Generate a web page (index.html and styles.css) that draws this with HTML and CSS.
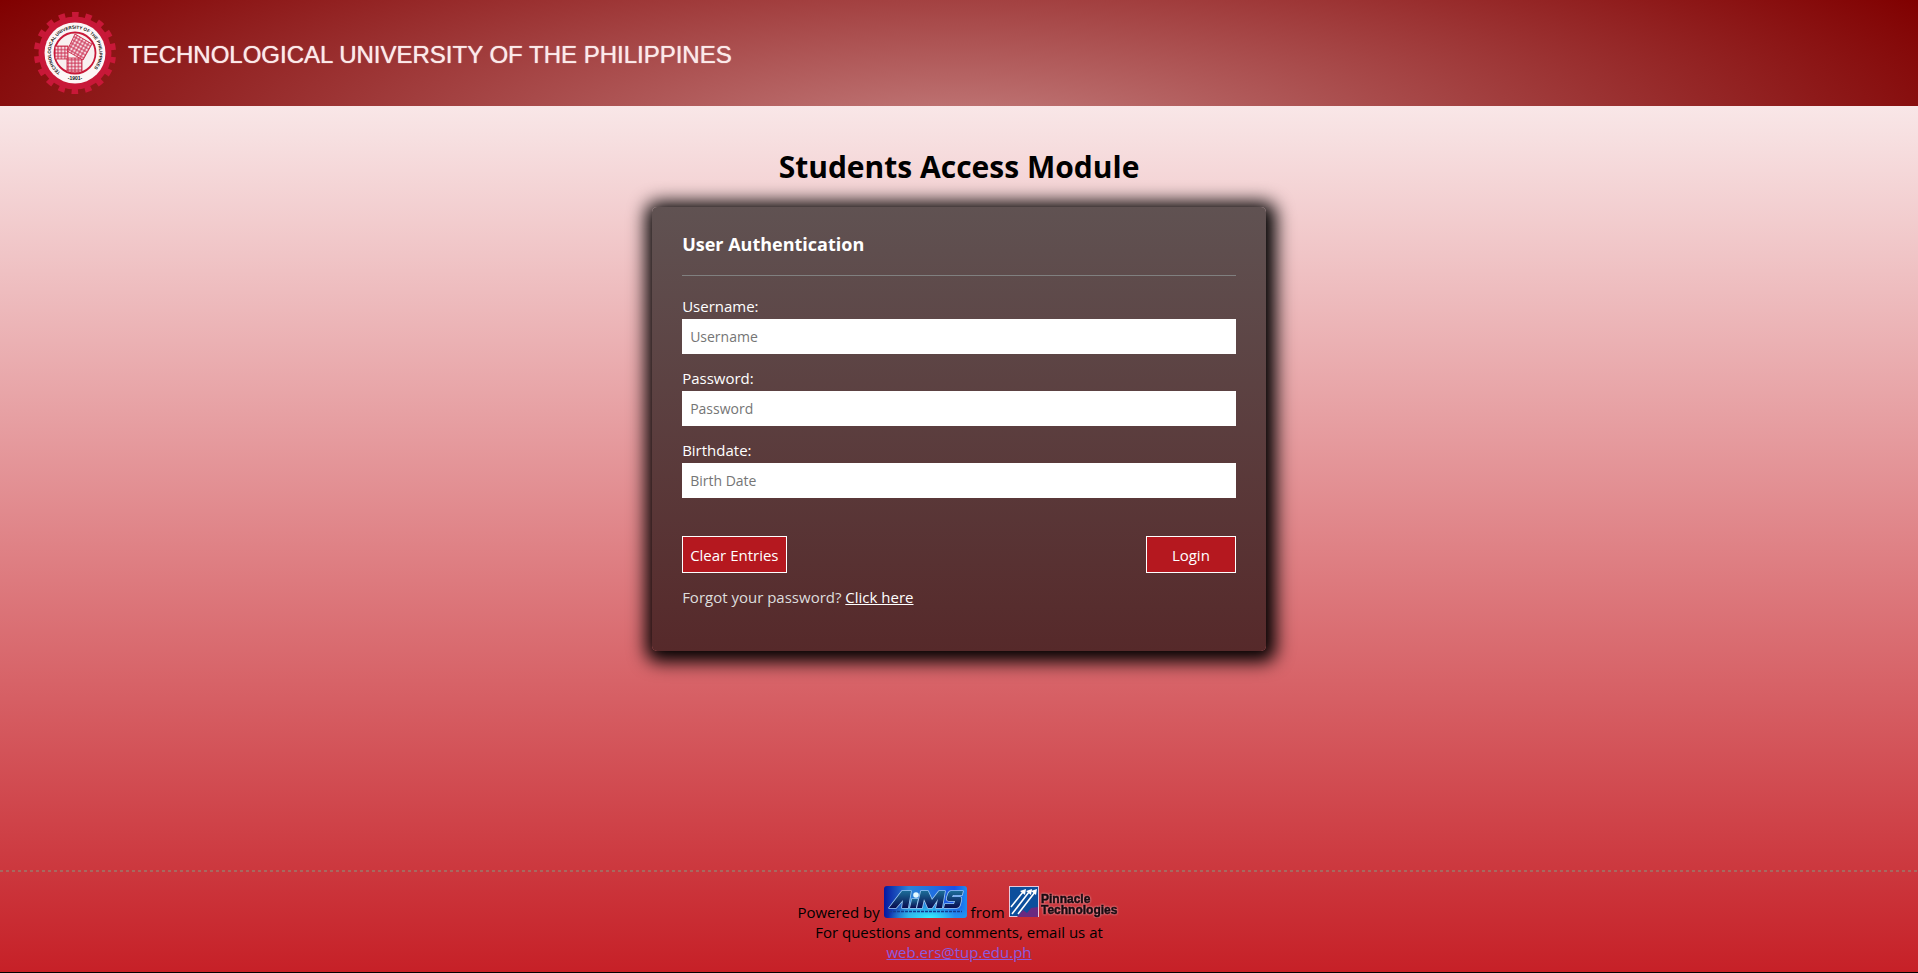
FILE: index.html
```html
<!DOCTYPE html>
<html lang="en">
<head>
<meta charset="utf-8">
<title>Students Access Module</title>
<link rel="stylesheet" href="styles.css">
</head>
<body>
<header class="banner">
  <svg class="seal" viewBox="-42 -42 84 84" role="img" aria-label="University seal">
    <defs>
      <path id="ring" d="M-14.5 19.5A24.3 24.3 0 1 1 14.5 19.5"/>
      <pattern id="grid" width="3.4" height="3.4" patternUnits="userSpaceOnUse"><rect width="3.4" height="3.4" fill="#cc3355"/><rect x=".5" y=".5" width="2.4" height="2.4" fill="#f6dfe4"/></pattern>
      <pattern id="grid-tilted" width="3.4" height="3.4" patternUnits="userSpaceOnUse" patternTransform="rotate(30)"><rect width="3.4" height="3.4" fill="#cc3355"/><rect x=".5" y=".5" width="2.4" height="2.4" fill="#f6dfe4"/></pattern>
    </defs>
    <circle r="36.5" fill="#c81838"/>
    <circle r="38.3" fill="none" stroke="#c81838" stroke-width="5.6" stroke-dasharray="6.4 6.97" stroke-dashoffset="3.2" transform="rotate(10)"/>
    <circle r="30.5" fill="#fdf6f6"/>
    <circle r="20.5" fill="#f8f0f0" stroke="#c81838" stroke-width="1.8"/>
    <rect x="-20" y="-7" width="13" height="13" fill="url(#grid)" stroke="#c81838" stroke-width=".8"/>
    <rect x="-8" y="5" width="15" height="14" fill="url(#grid)" stroke="#c81838" stroke-width=".8"/>
    <path d="M0-19L17-9 8 7-8-2z" fill="url(#grid-tilted)" stroke="#c81838" stroke-width=".8"/>
    <text class="seal-text"><textPath href="#ring">TECHNOLOGICAL UNIVERSITY OF THE PHILIPPINES</textPath></text>
    <text class="seal-text seal-year" y="27" text-anchor="middle">-1901-</text>
  </svg>
  <span class="school">TECHNOLOGICAL UNIVERSITY OF THE PHILIPPINES</span>
</header>
<main class="content">
  <h1 class="title">Students Access Module</h1>
  <form class="card">
    <h2 class="card-title">User Authentication</h2>
    <div class="field"><label for="user">Username:</label><input id="user" type="text" placeholder="Username"></div>
    <div class="field"><label for="pass">Password:</label><input id="pass" type="password" placeholder="Password"></div>
    <div class="field"><label for="birth">Birthdate:</label><input id="birth" type="text" placeholder="Birth Date"></div>
    <div class="actions"><button class="btn" type="reset">Clear Entries</button><button class="btn login" type="submit">Login</button></div>
    <p class="forgot">Forgot your password? <a href="#">Click here</a></p>
  </form>
</main>
<footer class="footer">
  <div>Powered by
    <svg class="aims" viewBox="0 0 83 32" role="img" aria-label="AIMS">
      <defs>
        <linearGradient id="sea" x1="0" y1="0" x2="1" y2="0"><stop offset="0" stop-color="#0618a0"/><stop offset=".3" stop-color="#2c84d8"/><stop offset=".6" stop-color="#1f6fe0"/><stop offset=".85" stop-color="#1a50e8"/><stop offset="1" stop-color="#1c8cf0"/></linearGradient>
        <linearGradient id="ink" x1="0" y1="0" x2="0" y2="1"><stop offset="0" stop-color="#1c6c98"/><stop offset="1" stop-color="#080c50"/></linearGradient>
        <radialGradient id="glow" cx=".55" cy="1" r=".5"><stop offset="0" stop-color="#35f0ff"/><stop offset="1" stop-color="#35f0ff" stop-opacity="0"/></radialGradient>
      </defs>
      <rect width="83" height="32" rx="3" fill="url(#sea)"/>
      <rect width="83" height="32" rx="3" fill="url(#glow)"/>
      <g fill="url(#ink)" stroke="#9cc8f0" stroke-width="1.6" stroke-linejoin="round" paint-order="stroke">
        <path d="M5 22L18 5h9l-3 17h-6l1-8-7 8z"/>
        <path d="M28 13h6l-2 9h-6z"/>
        <path d="M37 5h7l4 9 7-9h6l-3 17h-6l2-9-6 9h-4l-4-9-2 9h-5z"/>
        <path d="M67 5h12l-1 4h-9l-1 2h8q2 0 1 4l-1 4q-1 3-4 3H60l1-4h9l1-3h-6q-3 0-2-4l1-3q1-3 3-3z"/>
      </g>
      <circle cx="32" cy="9" r="2.8" fill="#e4faff"/>
      <path d="M5 25.5h73" stroke="#123c90" stroke-width="1.4" stroke-dasharray="3 1"/>
    </svg>
    from
    <svg class="pinnacle" viewBox="0 0 112 32" role="img" aria-label="Pinnacle Technologies">
      <rect x=".5" y=".5" width="29" height="30" fill="#0d4f9c" stroke="#e6c9dc"/>
      <path d="M8 31L14 24l4 3 4-5 7-1v10z" fill="#6a2a80"/>
      <path d="M2 21L14 6M3 28L20 6M9 28L26 6" stroke="#fff" stroke-width="1.6"/>
      <path d="M11 5l6-2-1 6zM17 5l6-2-1 6zM22 5l6-2-1 6z" fill="#fff"/>
      <g class="pinnacle-text"><text x="32" y="17">Pinnacle</text><text x="32" y="28">Technologies</text></g>
    </svg>
  </div>
  <div>For questions and comments, email us at</div>
  <div><a class="mail" href="mailto:web.ers@tup.edu.ph">web.ers@tup.edu.ph</a></div>
</footer>
</body>
</html>
```

FILE: styles.css
```css
* { box-sizing: border-box; }
body {
  margin: 0;
  min-height: 100vh;
  display: flex;
  flex-direction: column;
  font: 15px/20px "Open Sans", sans-serif;
  color: #000;
  background: linear-gradient(#ffffff, #c62027);
  border-bottom: 1px solid #000;
}
.banner {
  display: flex;
  align-items: center;
  gap: 11px;
  height: 106px;
  padding-left: 33px;
  background: radial-gradient(57% 270% at 50% 130%, #c47e7e, #800000);
}
.seal { width: 84px; height: 84px; flex: none; }
.seal-text { font: bold 4.5px "Liberation Sans", sans-serif; fill: #111; }
.seal-year { font-size: 5px; }
.school {
  padding-top: 3px;
  font: 24px/30px "Liberation Sans", Arial, sans-serif;
  color: #fbeaea;
  text-shadow: 0 0 1px #fbeaea;
}
.content {
  flex: 1;
  display: flex;
  flex-direction: column;
  align-items: center;
  padding-top: 40px;
}
.title { margin: 0 0 20px; font-size: 30px; line-height: 41px; }
.card {
  width: 32%;
  min-width: 320px;
  padding: 25px 30px 44px;
  border-radius: 5px;
  color: #fff;
  background: linear-gradient(#605252, #56292a);
  box-shadow: 2px 3px 18px 8px #000;
}
.card-title {
  margin: 0 0 20px;
  padding-bottom: 18px;
  border-bottom: 1px solid #808080;
  font-size: 18px;
  line-height: 25px;
}
.field { display: flex; flex-direction: column; gap: 3px; margin-bottom: 14px; }
.field input {
  width: 100%;
  height: 35px;
  padding: 0 8px;
  border: 0;
  background: #fff;
  font: 14px "Open Sans", sans-serif;
}
.field input::placeholder { color: #757575; }
.actions { display: flex; justify-content: space-between; margin-top: 38px; }
.btn {
  height: 37px;
  padding: 0 7px;
  border: 1px solid #fff;
  background: #b5181f;
  color: #fff;
  font: 15px "Open Sans", sans-serif;
}
.login { width: 90px; }
.forgot { margin: 14px 0 0; color: #ddd; }
.forgot a { color: #fff; }
.footer {
  padding: 16px 0 10px;
  background: repeating-linear-gradient(90deg, #a8685f 0 3px, transparent 3px 6px) top / 100% 2px no-repeat;
  text-align: center;
}
.aims { width: 83px; height: 32px; }
.pinnacle { width: 112px; height: 32px; }
.pinnacle-text {
  font: bold 12px "Liberation Sans", sans-serif;
  fill: #1a0a10;
  stroke: #1a0a10;
  stroke-width: .5;
  filter: drop-shadow(0 0 1px #f0c0c8);
}
.mail { color: #8a5be0; }
```
